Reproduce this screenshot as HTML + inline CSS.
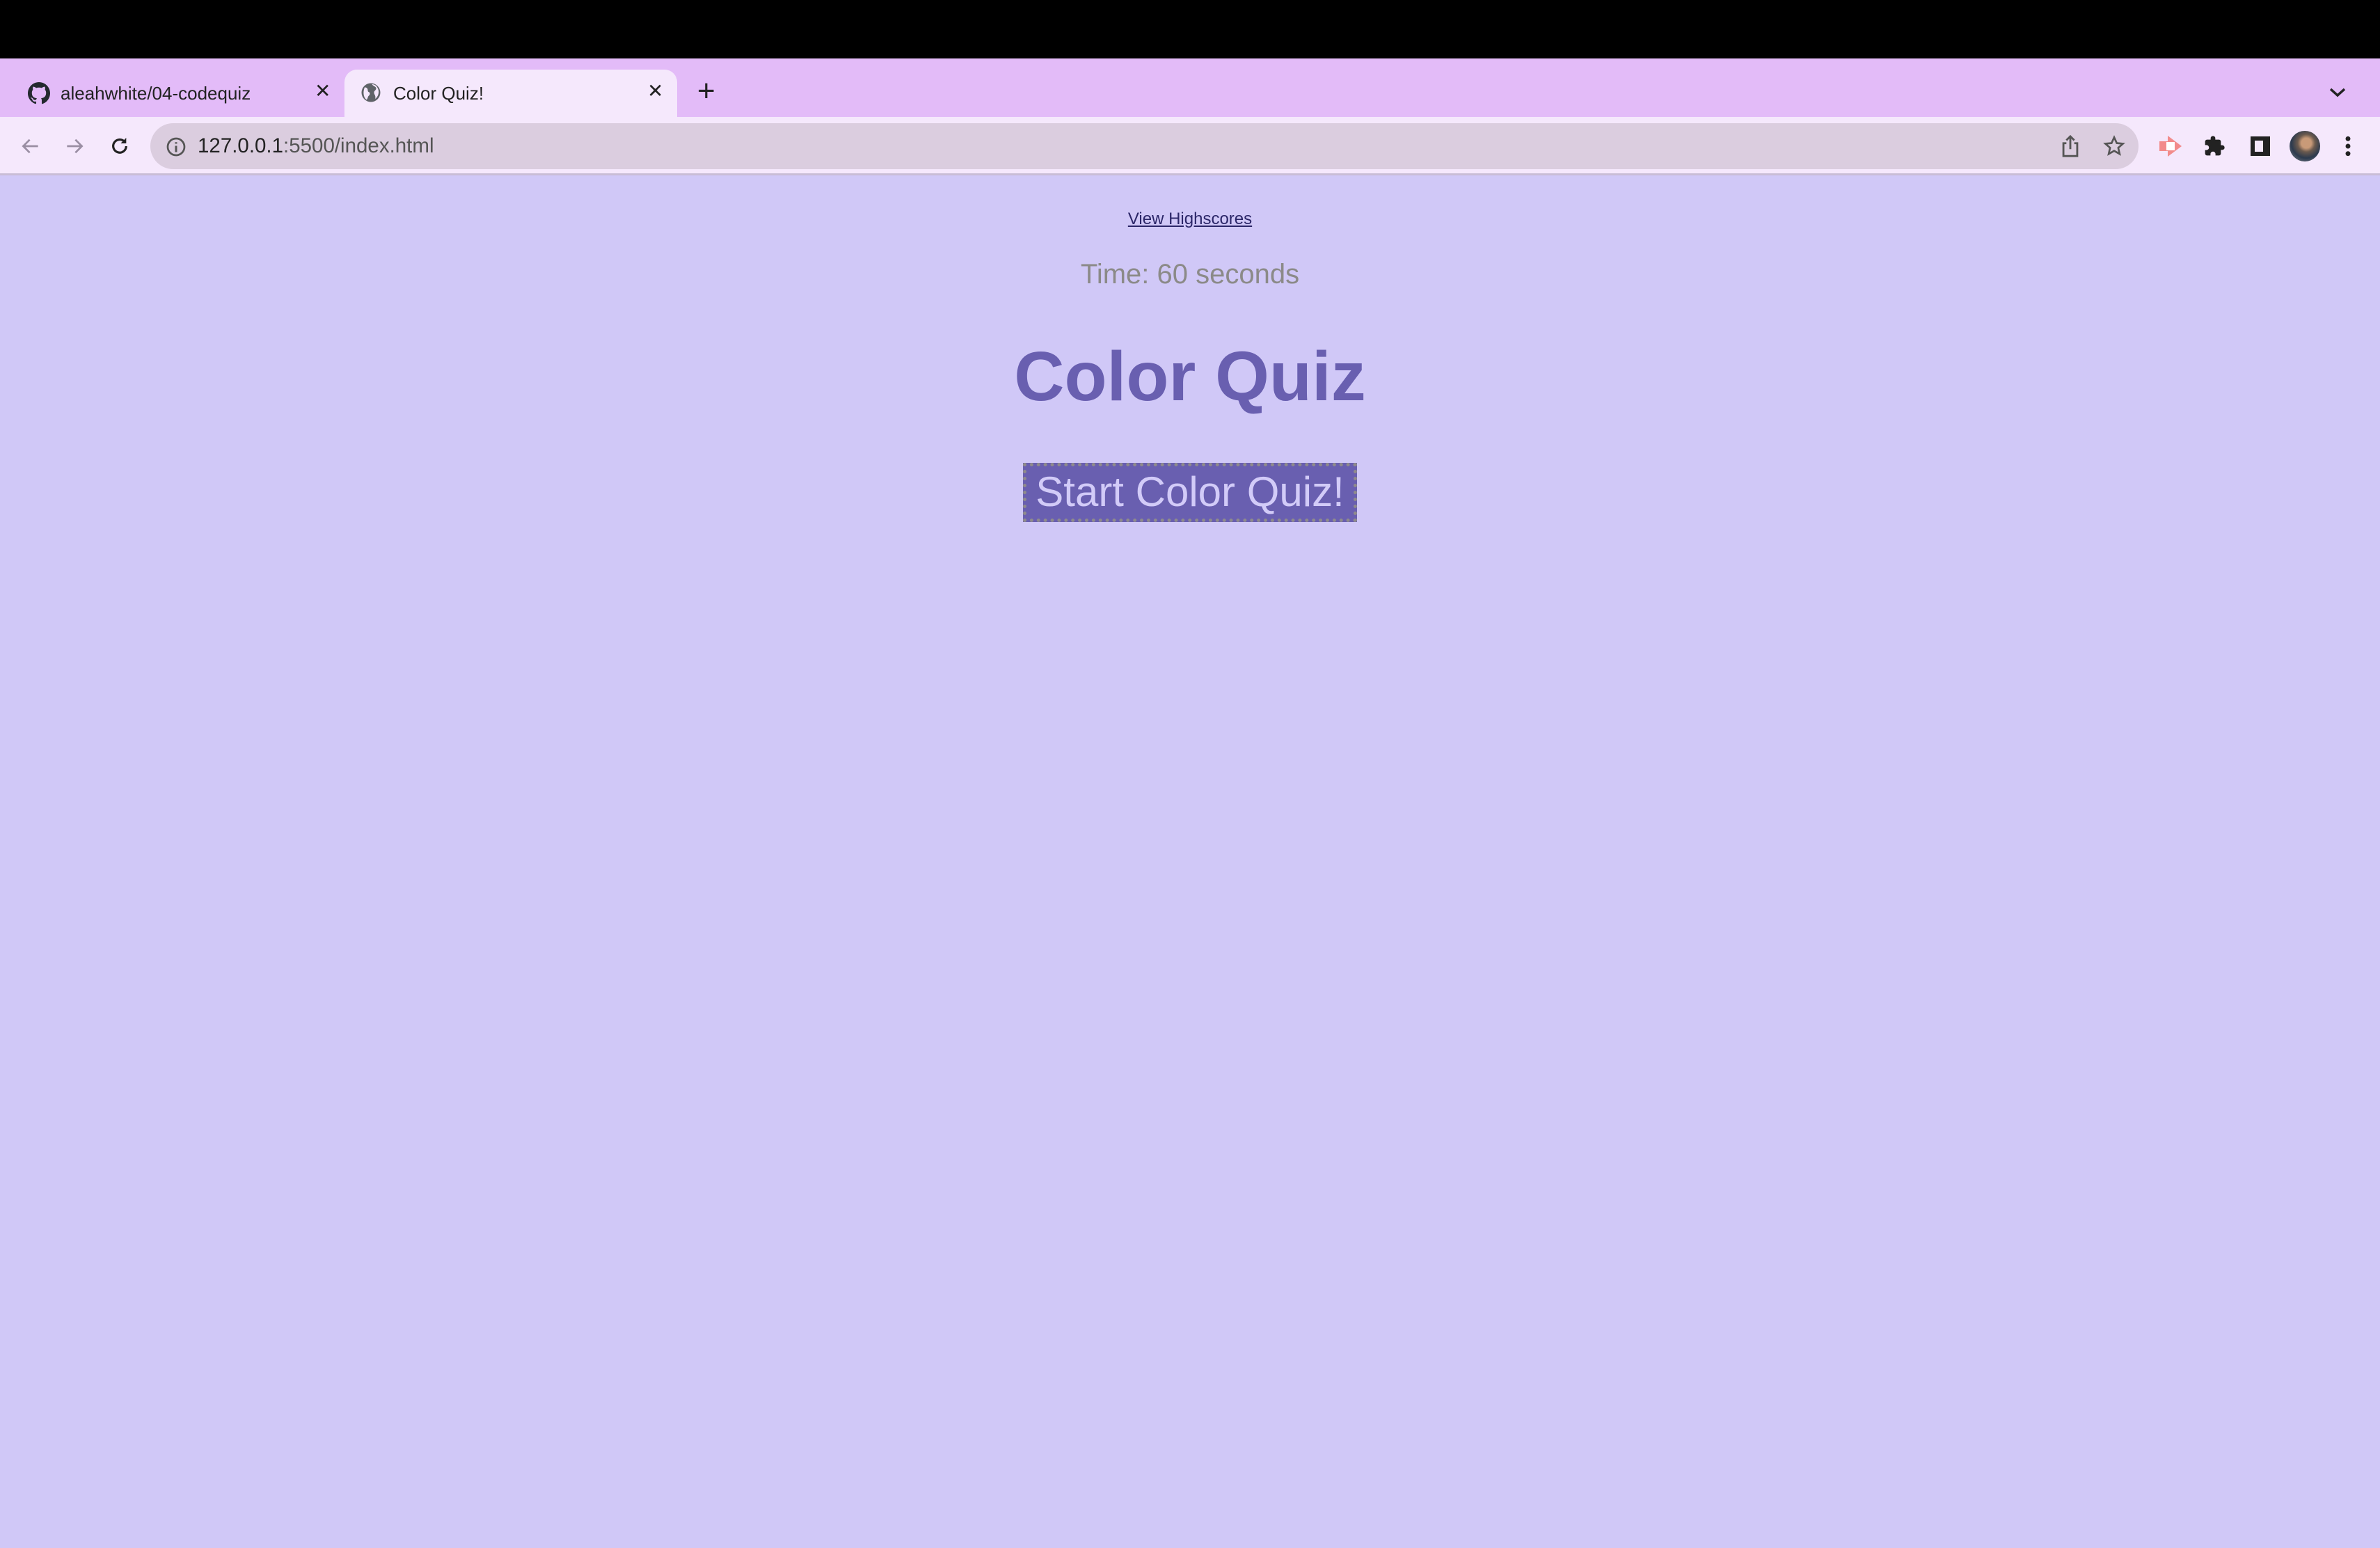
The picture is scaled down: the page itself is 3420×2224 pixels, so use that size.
<!DOCTYPE html>
<html><head><meta charset="utf-8"><style>
*{margin:0;padding:0;box-sizing:border-box}
body{width:3420px;height:2224px;background:#d0c8f7;font-family:"Liberation Sans",Arial,sans-serif;position:relative;overflow:hidden}
.abs{position:absolute}
#black{left:0;top:0;width:3420px;height:84px;background:#000}
#tabs{left:0;top:84px;width:3420px;height:84px;background:#e3bbf8}
#tb{left:0;top:168px;width:3420px;height:84px;background:#f5e8fc;border-bottom:3px solid #c9bdd6}
#atab{left:495px;top:100px;width:478px;height:70px;background:#f5e8fc;border-radius:18px 18px 0 0}
.tt{font-size:26px;color:#222;top:119px}
.x{font-size:28px;color:#222;top:114px}
#omni{left:216px;top:177px;width:2857px;height:66px;background:#dbcddf;border-radius:33px}
#url{left:284px;top:193px;font-size:29.5px;color:#222}
.c{left:0;width:3420px;text-align:center}
#hs{top:301px;font-size:24px;color:#2b2668;text-decoration:underline}
#time{top:372px;font-size:40px;color:#8b8a88}
#h1{top:484px;font-size:100px;font-weight:bold;color:#695fb0}
#btn{left:1470px;top:665px;width:480px;height:85px;background:#695fb0;border:5px dotted #8f8b8c;color:#d2cbf8;font-size:60px;text-align:center;line-height:74px}
</style></head><body>
<div id="black" class="abs"></div>
<div id="tabs" class="abs"></div>
<div id="atab" class="abs"></div>
<div id="tb" class="abs"></div>
<svg class="abs" style="left:40px;top:118px" width="32" height="32" viewBox="0 0 16 16"><path fill="#24292f" d="M8 0C3.580 0 0 3.58 0 8c0 3.54 2.29 6.53 5.470 7.59.4.07.55-.17.55-.38v-1.34c-2.23.48-2.7-1.07-2.7-1.07-.36-.92-.89-1.17-.89-1.17-.73-.5.05-.49.05-.49.8.06 1.23.83 1.23.83.71 1.22 1.87.87 2.33.66.07-.52.28-.87.5-1.07-1.78-.2-3.64-.89-3.64-3.95 0-.87.31-1.59.82-2.15-.08-.2-.36-1.020.08-2.12 0 0 .67-.21 2.2.82a7.6 7.6 0 0 1 4 0c1.53-1.04 2.2-.82 2.2-.82.44 1.1.16 1.92.08 2.12.51.56.82 1.27.82 2.15 0 3.07-1.87 3.75-3.65 3.95.29.25.54.73.54 1.48v2.2c0 .21.15.46.55.38A8 8 0 0 0 16 8c0-4.42-3.58-8-8-8z"/></svg>
<div class="abs tt" style="left:87px">aleahwhite/04-codequiz</div>
<div class="abs x" style="left:452px">✕</div>
<svg class="abs" style="left:518px;top:118px" width="30" height="30" viewBox="0 0 20 20"><circle cx="10" cy="10" r="9" fill="#5f6368"/><path fill="#f5e8fc" d="M4 5c2 0 3 1 3 3s2 1 2 3-2 2-2 4l-1 2C3 15 2 10 4 5zM11 2c1 2 4 2 4 4s-2 2-2 4 2 3 1 6c3-2 4-6 3-9-1-3-3-5-6-5z"/></svg>
<div class="abs tt" style="left:565px">Color Quiz!</div>
<div class="abs x" style="left:930px">✕</div>
<div class="abs" style="left:1002px;top:106px;font-size:44px;color:#222;font-weight:300">+</div>
<svg class="abs" style="left:3346px;top:124px" width="26" height="18" viewBox="0 0 26 18"><path d="M3 4l10 9 10-9" stroke="#222" stroke-width="3.5" fill="none"/></svg>
<svg class="abs" style="left:28px;top:194px" width="32" height="32" viewBox="0 0 24 24"><path d="M20 12H5M11 5l-7 7 7 7" stroke="#9a8ea3" stroke-width="2" fill="none"/></svg>
<svg class="abs" style="left:91px;top:194px" width="32" height="32" viewBox="0 0 24 24"><path d="M4 12h15M13 5l7 7-7 7" stroke="#9a8ea3" stroke-width="2" fill="none"/></svg>
<svg class="abs" style="left:156px;top:194px" width="32" height="32" viewBox="0 0 24 24"><path d="M19 12a7 7 0 1 1-2-5" stroke="#222" stroke-width="2.4" fill="none"/><path d="M19 3v6h-6z" fill="#222"/></svg>
<div id="omni" class="abs"></div>
<svg class="abs" style="left:238px;top:196px" width="30" height="30" viewBox="0 0 20 20"><circle cx="10" cy="10" r="8" stroke="#555" stroke-width="1.8" fill="none"/><path d="M10 9v6M10 5.5v1.5" stroke="#555" stroke-width="2"/></svg>
<div id="url" class="abs">127.0.0.1<span style="color:#555">:5500/index.html</span></div>
<svg class="abs" style="left:2960px;top:193px" width="30" height="34" viewBox="0 0 20 24"><path d="M6 9H3v13h14V9h-3M10 15V2M6 6l4-4 4 4" stroke="#555" stroke-width="2" fill="none"/></svg>
<svg class="abs" style="left:3022px;top:194px" width="32" height="32" viewBox="0 0 24 24"><path d="M12 2.5l2.8 6.2 6.7.6-5.1 4.5 1.5 6.6L12 17l-5.9 3.4 1.5-6.6-5.1-4.5 6.7-.6z" stroke="#555" stroke-width="2" fill="none"/></svg>
<svg class="abs" style="left:3103px;top:195px" width="34" height="30" viewBox="0 0 34 30"><path d="M0 8h12v14H0z" fill="#f28b8b"/><path d="M12 0l20 15-20 15z" fill="#f28b8b"/><path d="M10 9h12v12H10z" fill="#fff"/></svg>
<svg class="abs" style="left:3166px;top:194px" width="32" height="32" viewBox="0 0 24 24"><path fill="#222" d="M20.5 11H19V7a2 2 0 0 0-2-2h-4V3.5a2.5 2.5 0 0 0-5 0V5H4a2 2 0 0 0-2 2v3.8h1.5a2.7 2.7 0 0 1 0 5.4H2V20a2 2 0 0 0 2 2h3.8v-1.5a2.7 2.7 0 0 1 5.4 0V22H17a2 2 0 0 0 2-2v-4h1.5a2.5 2.5 0 0 0 0-5z"/></svg>
<div class="abs" style="left:3234px;top:196px;width:28px;height:28px;border:6px solid #222;border-right-width:10px;"></div>
<div class="abs" style="left:3290px;top:188px;width:44px;height:44px;border-radius:50%;background:radial-gradient(circle at 55% 40%,#c89a78 0 20%,#6b5a4e 35%,#2c3a4e 60%,#8a8e95 100%)"></div>
<svg class="abs" style="left:3366px;top:194px" width="16" height="32" viewBox="0 0 8 24"><circle cx="4" cy="4" r="2.6" fill="#222"/><circle cx="4" cy="12" r="2.6" fill="#222"/><circle cx="4" cy="20" r="2.6" fill="#222"/></svg>
<div id="hs" class="abs c">View Highscores</div>
<div id="time" class="abs c">Time: 60 seconds</div>
<div id="h1" class="abs c">Color Quiz</div>
<div id="btn" class="abs">Start Color Quiz!</div>
</body></html>
